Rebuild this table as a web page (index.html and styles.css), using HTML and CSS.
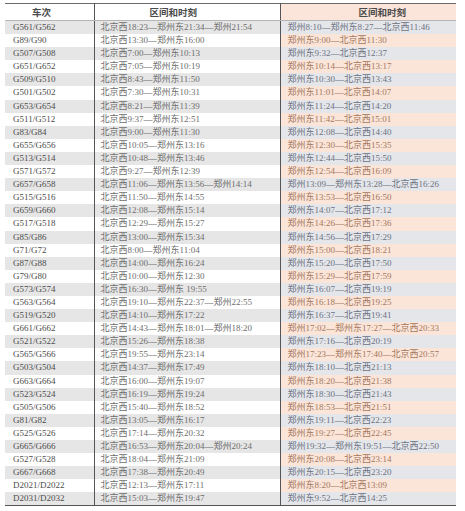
FILE: index.html
```html
<!DOCTYPE html>
<html lang="zh-CN">
<head>
<meta charset="utf-8">
<title>车次 区间和时刻</title>
<link rel="stylesheet" href="styles.css">
</head>
<body>
<table class="timetable">
<colgroup><col class="w1"><col class="w2"><col class="w3"></colgroup>
<thead>
<tr><th class="c1">车次</th><th class="c2">区间和时刻</th><th class="c3">区间和时刻</th></tr>
</thead>
<tbody>
<tr><td class="c1">G561/G562</td><td class="c2">北京西18:23—郑州东21:34—郑州21:54</td><td class="c3">郑州8:10—郑州东8:27—北京西11:46</td></tr>
<tr><td class="c1">G89/G90</td><td class="c2">北京西13:30—郑州东16:00</td><td class="c3">郑州东9:00—北京西11:30</td></tr>
<tr><td class="c1">G507/G508</td><td class="c2">北京西7:00—郑州东10:13</td><td class="c3">郑州东9:32—北京西12:37</td></tr>
<tr><td class="c1">G651/G652</td><td class="c2">北京西7:05—郑州东10:19</td><td class="c3">郑州东10:14—北京西13:17</td></tr>
<tr><td class="c1">G509/G510</td><td class="c2">北京西8:43—郑州东11:50</td><td class="c3">郑州东10:30—北京西13:43</td></tr>
<tr><td class="c1">G501/G502</td><td class="c2">北京西7:30—郑州东10:31</td><td class="c3">郑州东11:01—北京西14:07</td></tr>
<tr><td class="c1">G653/G654</td><td class="c2">北京西8:21—郑州东11:39</td><td class="c3">郑州东11:24—北京西14:20</td></tr>
<tr><td class="c1">G511/G512</td><td class="c2">北京西9:37—郑州东12:51</td><td class="c3">郑州东11:42—北京西15:01</td></tr>
<tr><td class="c1">G83/G84</td><td class="c2">北京西9:00—郑州东11:30</td><td class="c3">郑州东12:08—北京西14:40</td></tr>
<tr><td class="c1">G655/G656</td><td class="c2">北京西10:05—郑州东13:16</td><td class="c3">郑州东12:30—北京西15:35</td></tr>
<tr><td class="c1">G513/G514</td><td class="c2">北京西10:48—郑州东13:46</td><td class="c3">郑州东12:44—北京西15:50</td></tr>
<tr><td class="c1">G571/G572</td><td class="c2">北京西9:27—郑州东12:39</td><td class="c3">郑州东12:54—北京西16:09</td></tr>
<tr><td class="c1">G657/G658</td><td class="c2">北京西11:06—郑州东13:56—郑州14:14</td><td class="c3">郑州13:09—郑州东13:28—北京西16:26</td></tr>
<tr><td class="c1">G515/G516</td><td class="c2">北京西11:50—郑州东14:55</td><td class="c3">郑州东13:53—北京西16:50</td></tr>
<tr><td class="c1">G659/G660</td><td class="c2">北京西12:08—郑州东15:14</td><td class="c3">郑州东14:07—北京西17:12</td></tr>
<tr><td class="c1">G517/G518</td><td class="c2">北京西12:29—郑州东15:27</td><td class="c3">郑州东14:26—北京西17:36</td></tr>
<tr><td class="c1">G85/G86</td><td class="c2">北京西13:00—郑州东15:34</td><td class="c3">郑州东14:56—北京西17:29</td></tr>
<tr><td class="c1">G71/G72</td><td class="c2">北京西8:00—郑州东11:04</td><td class="c3">郑州东15:00—北京西18:21</td></tr>
<tr><td class="c1">G87/G88</td><td class="c2">北京西14:00—郑州东16:24</td><td class="c3">郑州东15:20—北京西17:50</td></tr>
<tr><td class="c1">G79/G80</td><td class="c2">北京西10:00—郑州东12:30</td><td class="c3">郑州东15:29—北京西17:59</td></tr>
<tr><td class="c1">G573/G574</td><td class="c2">北京西16:30—郑州东 19:55</td><td class="c3">郑州东16:07—北京西19:19</td></tr>
<tr><td class="c1">G563/G564</td><td class="c2">北京西19:10—郑州东22:37—郑州22:55</td><td class="c3">郑州东16:18—北京西19:25</td></tr>
<tr><td class="c1">G519/G520</td><td class="c2">北京西14:10—郑州东17:22</td><td class="c3">郑州东16:37—北京西19:41</td></tr>
<tr><td class="c1">G661/G662</td><td class="c2">北京西14:43—郑州东18:01—郑州18:20</td><td class="c3">郑州17:02—郑州东17:27—北京西20:33</td></tr>
<tr><td class="c1">G521/G522</td><td class="c2">北京西15:26—郑州东18:38</td><td class="c3">郑州东17:16—北京西20:19</td></tr>
<tr><td class="c1">G565/G566</td><td class="c2">北京西19:55—郑州东23:14</td><td class="c3">郑州17:23—郑州东17:40—北京西20:57</td></tr>
<tr><td class="c1">G503/G504</td><td class="c2">北京西14:37—郑州东17:49</td><td class="c3">郑州东18:10—北京西21:13</td></tr>
<tr><td class="c1">G663/G664</td><td class="c2">北京西16:00—郑州东19:07</td><td class="c3">郑州东18:20—北京西21:38</td></tr>
<tr><td class="c1">G523/G524</td><td class="c2">北京西16:19—郑州东19:24</td><td class="c3">郑州东18:30—北京西21:43</td></tr>
<tr><td class="c1">G505/G506</td><td class="c2">北京西15:40—郑州东18:52</td><td class="c3">郑州东18:53—北京西21:51</td></tr>
<tr><td class="c1">G81/G82</td><td class="c2">北京西13:05—郑州东16:17</td><td class="c3">郑州东19:11—北京西22:23</td></tr>
<tr><td class="c1">G525/G526</td><td class="c2">北京西17:14—郑州东20:32</td><td class="c3">郑州东19:27—北京西22:45</td></tr>
<tr><td class="c1">G665/G666</td><td class="c2">北京西16:53—郑州东20:04—郑州20:24</td><td class="c3">郑州19:32—郑州东19:51—北京西22:50</td></tr>
<tr><td class="c1">G527/G528</td><td class="c2">北京西18:04—郑州东21:09</td><td class="c3">郑州东20:08—北京西23:14</td></tr>
<tr><td class="c1">G667/G668</td><td class="c2">北京西17:38—郑州东20:49</td><td class="c3">郑州东20:15—北京西23:20</td></tr>
<tr><td class="c1">D2021/D2022</td><td class="c2">北京西12:13—郑州东17:11</td><td class="c3">郑州东8:20—北京西13:09</td></tr>
<tr><td class="c1">D2031/D2032</td><td class="c2">北京西15:03—郑州东19:47</td><td class="c3">郑州东9:52—北京西14:25</td></tr>
</tbody>
</table>
</body>
</html>
```

FILE: styles.css
```css
html, body {
  margin: 0;
  padding: 0;
  background: #ffffff;
}

body {
  padding: 3px 0 0 5px;
}

.timetable {
  border-collapse: collapse;
  table-layout: fixed;
  width: 451px;
  font-family: "Liberation Serif", "Noto Sans CJK SC", serif;
  font-size: 9px;
  color: #5a5a5a;
  border-top: 1.5px solid #6a6a6a;
  border-bottom: 1px solid #555555;
}

.timetable .w1 { width: 89px; }
.timetable .w2 { width: 186px; }
.timetable .w3 { width: 176px; }

.timetable th,
.timetable td {
  box-sizing: border-box;
  padding: 0;
  white-space: nowrap;
  overflow: hidden;
  text-align: left;
}

.timetable th {
  height: 17px;
  font-family: "Noto Sans CJK SC", sans-serif;
  font-weight: 700;
  font-size: 9.5px;
  color: #4a4a4a;
  border-bottom: 1px solid #b5b5b5;
  line-height: 16px;
}

.timetable th.c1 { padding-left: 27px; }
.timetable th.c2 { padding-left: 55px; }
.timetable th.c3 { padding-left: 78px; background: #fbe4d9; }

.timetable td {
  height: 13.1px;
  line-height: 13.1px;
}

.timetable .c2,
.timetable .c3 {
  border-left: 1px solid #555555;
}

.timetable td.c1 {
  padding-left: 8px;
  color: #4d4d4d;
}

.timetable td.c2 {
  padding-left: 6px;
  color: #6e6e6e;
}

.timetable td.c3 {
  padding-left: 7px;
}

.timetable tbody tr:nth-child(odd) td {
  background: #e6e6e6;
}

.timetable tbody tr:nth-child(odd) td.c3 {
  background: #e4e6ea;
  color: #6c7282;
}

.timetable tbody tr:nth-child(even) td.c3 {
  background: #fbe5d8;
  color: #a4785f;
}
```
